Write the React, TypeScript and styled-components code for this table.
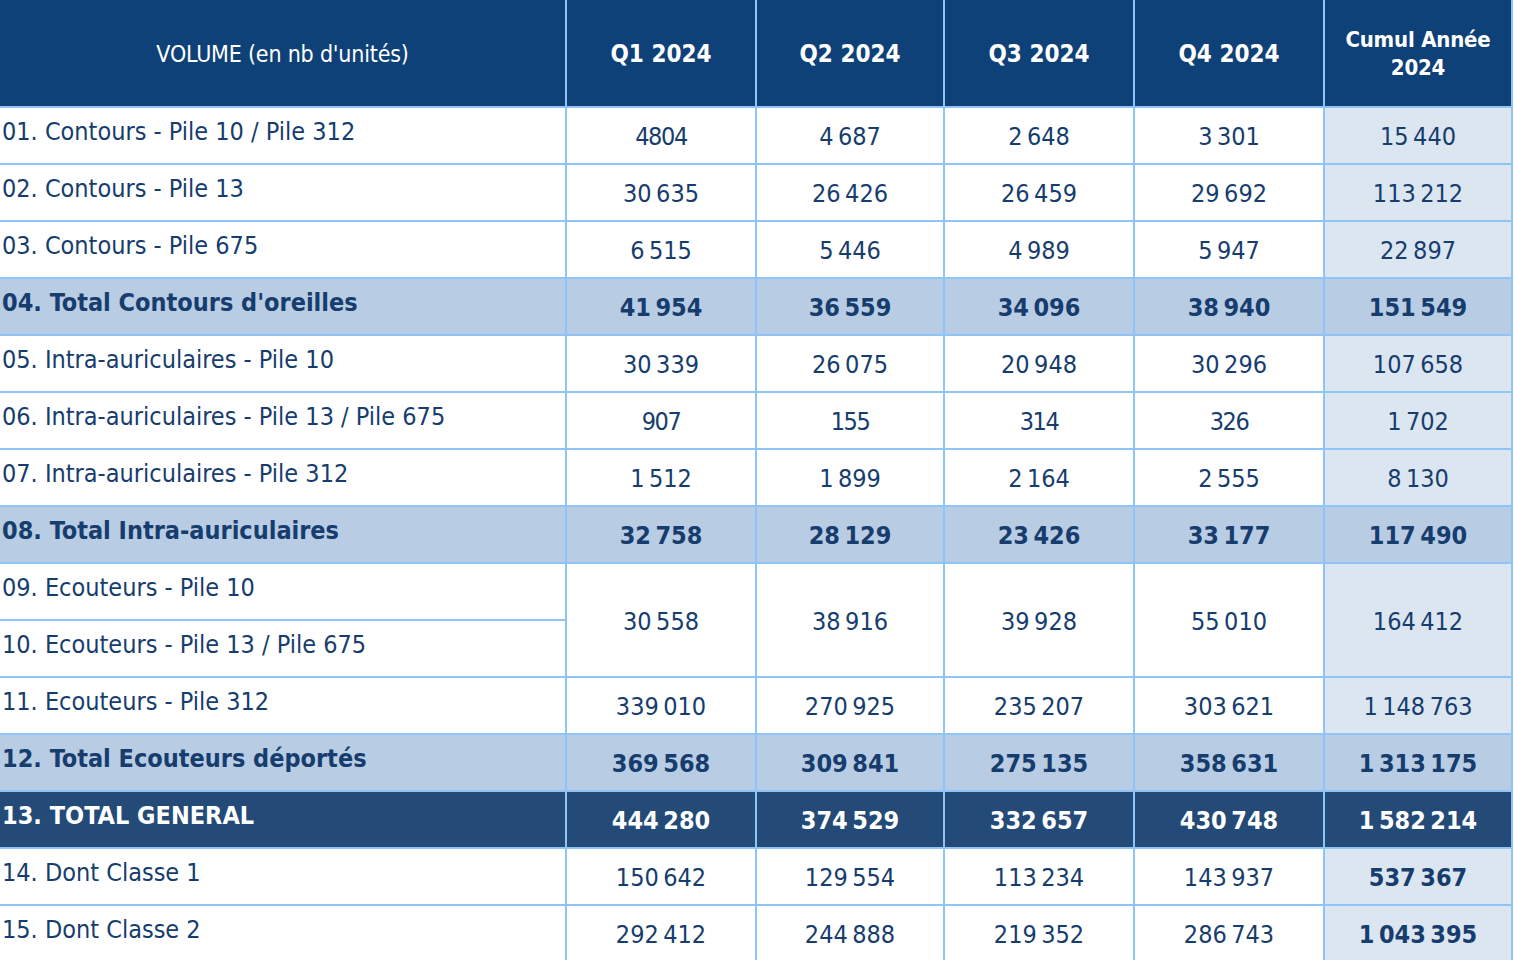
import React from 'react';
import styled, { createGlobalStyle, css } from 'styled-components';

const GlobalStyle = createGlobalStyle`
  html, body {
    margin: 0;
    padding: 0;
    background: #ffffff;
    overflow: hidden;
  }
`;

const palette = {
  header: '#0f4179',
  grand: '#244a77',
  total: '#b8cce4',
  cumul: '#dce6f1',
  border: '#8fc4f9',
  text: '#163d6d',
};

type RowKind = 'normal' | 'total' | 'grand';

interface RowData {
  label: string;
  kind: RowKind;
  values?: string[];
  span?: boolean;
  boldCumul?: boolean;
}

const n = (s: string) => s.replace(/ /g, '\u202F');

const rows: RowData[] = [
  { label: '01. Contours - Pile 10 / Pile 312', kind: 'normal', values: ['4804', '4 687', '2 648', '3 301', '15 440'] },
  { label: '02. Contours - Pile 13', kind: 'normal', values: ['30 635', '26 426', '26 459', '29 692', '113 212'] },
  { label: '03. Contours - Pile 675', kind: 'normal', values: ['6 515', '5 446', '4 989', '5 947', '22 897'] },
  { label: "04. Total Contours d'oreilles", kind: 'total', values: ['41 954', '36 559', '34 096', '38 940', '151 549'] },
  { label: '05. Intra-auriculaires - Pile 10', kind: 'normal', values: ['30 339', '26 075', '20 948', '30 296', '107 658'] },
  { label: '06. Intra-auriculaires - Pile 13 / Pile 675', kind: 'normal', values: ['907', '155', '314', '326', '1 702'] },
  { label: '07. Intra-auriculaires - Pile 312', kind: 'normal', values: ['1 512', '1 899', '2 164', '2 555', '8 130'] },
  { label: '08. Total Intra-auriculaires', kind: 'total', values: ['32 758', '28 129', '23 426', '33 177', '117 490'] },
  { label: '09. Ecouteurs - Pile 10', kind: 'normal', values: ['30 558', '38 916', '39 928', '55 010', '164 412'], span: true },
  { label: '10. Ecouteurs - Pile 13 / Pile 675', kind: 'normal' },
  { label: '11. Ecouteurs - Pile 312', kind: 'normal', values: ['339 010', '270 925', '235 207', '303 621', '1 148 763'] },
  { label: '12. Total Ecouteurs déportés', kind: 'total', values: ['369 568', '309 841', '275 135', '358 631', '1 313 175'] },
  { label: '13. TOTAL GENERAL', kind: 'grand', values: ['444 280', '374 529', '332 657', '430 748', '1 582 214'] },
  { label: '14. Dont Classe 1', kind: 'normal', values: ['150 642', '129 554', '113 234', '143 937', '537 367'], boldCumul: true },
  { label: '15. Dont Classe 2', kind: 'normal', values: ['292 412', '244 888', '219 352', '286 743', '1 043 395'], boldCumul: true },
];

const quarters = ['Q1 2024', 'Q2 2024', 'Q3 2024', 'Q4 2024'];
const colWidths = [567, 190, 188, 190, 190, 188];

const Table = styled.table`
  border-collapse: separate;
  border-spacing: 0;
  table-layout: fixed;
  width: ${colWidths.reduce((a, b) => a + b, 0)}px;
  font-family: 'DejaVu Sans Condensed', 'DejaVu Sans', sans-serif;
  color: ${palette.text};
`;

const cellBorders = css`
  box-sizing: border-box;
  border-right: 2px solid ${palette.border};
  border-bottom: 2px solid ${palette.border};
  padding: 0;
`;

const HeadCell = styled.th<{ $wide?: boolean }>`
  ${cellBorders};
  height: 108px;
  background: ${palette.header};
  color: #ffffff;
  text-align: center;
  vertical-align: middle;
  font-weight: ${(p) => (p.$wide ? 400 : 700)};
  font-size: ${(p) => (p.$wide ? '23px' : '24px')};
  letter-spacing: ${(p) => (p.$wide ? '-0.2px' : '0')};
  line-height: 28px;
  padding-top: 2px;
`;

const SmallHead = styled.span`
  display: inline-block;
  font-size: 22px;
  line-height: 28px;
  letter-spacing: -0.2px;
`;

const Row = styled.tr<{ $kind: RowKind }>`
  height: 57px;
  background: ${(p) =>
    p.$kind === 'grand' ? palette.grand : p.$kind === 'total' ? palette.total : '#ffffff'};
  color: ${(p) => (p.$kind === 'grand' ? '#ffffff' : palette.text)};
  font-weight: ${(p) => (p.$kind === 'normal' ? 400 : 700)};
`;

const LabelCell = styled.td`
  ${cellBorders};
  font-size: 25px;
  padding: 0 0 8px 2px;
  white-space: nowrap;
  vertical-align: middle;
`;

const ValueCell = styled.td<{ $cumul?: boolean; $kind: RowKind; $bold?: boolean }>`
  ${cellBorders};
  text-align: center;
  vertical-align: middle;
  font-size: 25px;
  letter-spacing: ${(p) => (p.$kind === 'normal' && !p.$bold ? '-1.4px' : '-0.4px')};
  padding-top: 2px;
  ${(p) => p.$bold && 'font-weight: 700;'}
  ${(p) => p.$cumul && p.$kind === 'normal' && `background: ${palette.cumul};`}
`;

export default function App() {
  return (
    <>
      <GlobalStyle />
      <Table>
        <colgroup>
          {colWidths.map((w, i) => (
            <col key={i} style={{ width: w }} />
          ))}
        </colgroup>
        <thead>
          <tr>
            <HeadCell $wide>VOLUME (en nb d'unités)</HeadCell>
            {quarters.map((q) => (
              <HeadCell key={q}>{q}</HeadCell>
            ))}
            <HeadCell>
              <SmallHead>
                Cumul Année
                <br />
                2024
              </SmallHead>
            </HeadCell>
          </tr>
        </thead>
        <tbody>
          {rows.map((r) => (
            <Row key={r.label} $kind={r.kind}>
              <LabelCell>{r.label}</LabelCell>
              {r.values?.map((v, i) => (
                <ValueCell
                  key={i}
                  $kind={r.kind}
                  $cumul={i === 4}
                  $bold={i === 4 && r.boldCumul}
                  rowSpan={r.span ? 2 : undefined}
                >
                  {n(v)}
                </ValueCell>
              ))}
            </Row>
          ))}
        </tbody>
      </Table>
    </>
  );
}
